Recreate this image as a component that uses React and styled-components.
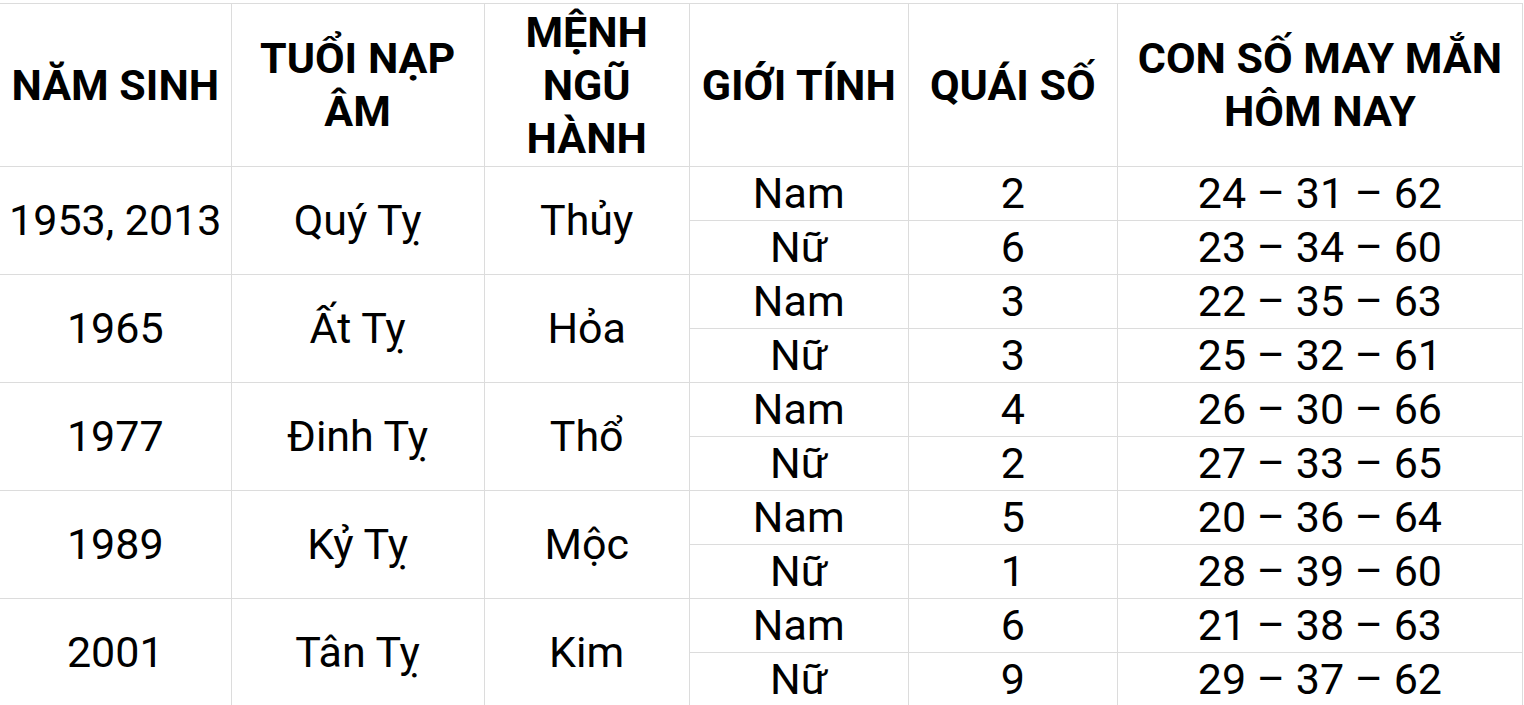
import React from "react";
import styled, { createGlobalStyle } from "styled-components";

const GlobalStyle = createGlobalStyle`
  html, body {
    margin: 0;
    padding: 0;
    background: #ffffff;
  }
  body {
    font-family: Roboto, "Noto Sans", "Liberation Sans", sans-serif;
    color: #000000;
  }
`;

const data = [
  {
    year: "1953, 2013",
    napAm: "Quý Tỵ",
    menh: "Thủy",
    rows: [
      { gender: "Nam", quai: "2", lucky: "24 – 31 – 62" },
      { gender: "Nữ", quai: "6", lucky: "23 – 34 – 60" },
    ],
  },
  {
    year: "1965",
    napAm: "Ất Tỵ",
    menh: "Hỏa",
    rows: [
      { gender: "Nam", quai: "3", lucky: "22 – 35 – 63" },
      { gender: "Nữ", quai: "3", lucky: "25 – 32 – 61" },
    ],
  },
  {
    year: "1977",
    napAm: "Đinh Tỵ",
    menh: "Thổ",
    rows: [
      { gender: "Nam", quai: "4", lucky: "26 – 30 – 66" },
      { gender: "Nữ", quai: "2", lucky: "27 – 33 – 65" },
    ],
  },
  {
    year: "1989",
    napAm: "Kỷ Tỵ",
    menh: "Mộc",
    rows: [
      { gender: "Nam", quai: "5", lucky: "20 – 36 – 64" },
      { gender: "Nữ", quai: "1", lucky: "28 – 39 – 60" },
    ],
  },
  {
    year: "2001",
    napAm: "Tân Tỵ",
    menh: "Kim",
    rows: [
      { gender: "Nam", quai: "6", lucky: "21 – 38 – 63" },
      { gender: "Nữ", quai: "9", lucky: "29 – 37 – 62" },
    ],
  },
];

const columns = [231, 253, 205, 219, 209, 405];

const headers = [
  "NĂM SINH",
  "TUỔI NẠP ÂM",
  "MỆNH NGŨ HÀNH",
  "GIỚI TÍNH",
  "QUÁI SỐ",
  "CON SỐ MAY MẮN HÔM NAY",
];

export default function App() {
  return (
    <Wrapper>
      <GlobalStyle />
      <Table>
        <colgroup>
          {columns.map((w, i) => (
            <col key={i} style={{ width: w }} />
          ))}
        </colgroup>
        <thead>
          <tr>
            {headers.map((h) => (
              <HeadCell key={h}>{h}</HeadCell>
            ))}
          </tr>
        </thead>
        <tbody>
          {data.map((group) =>
            group.rows.map((row, i) => (
              <tr key={group.year + row.gender}>
                {i === 0 && (
                  <>
                    <Cell rowSpan={2}>{group.year}</Cell>
                    <Cell rowSpan={2}>{group.napAm}</Cell>
                    <Cell rowSpan={2}>{group.menh}</Cell>
                  </>
                )}
                <Cell $short>{row.gender}</Cell>
                <Cell $short>{row.quai}</Cell>
                <Cell $short>{row.lucky}</Cell>
              </tr>
            ))
          )}
        </tbody>
      </Table>
    </Wrapper>
  );
}

const Wrapper = styled.div`
  width: 1524px;
  height: 705px;
  overflow: hidden;
  padding-top: 3px;
  box-sizing: border-box;
`;

const Table = styled.table`
  width: 1523px;
  border-collapse: collapse;
  table-layout: fixed;
  font-size: 43px;
  line-height: 53px;

  th,
  td {
    border: 1px solid #dcdcdc;
    text-align: center;
    vertical-align: middle;
    padding: 0 3px;
  }

  tr > :first-child {
    border-left: none;
  }
`;

const HeadCell = styled.th`
  font-weight: 700;
  height: 162px;
`;

const Cell = styled.td`
  font-weight: 400;
  height: ${(p) => (p.$short ? "53px" : "auto")};
  white-space: nowrap;
`;
